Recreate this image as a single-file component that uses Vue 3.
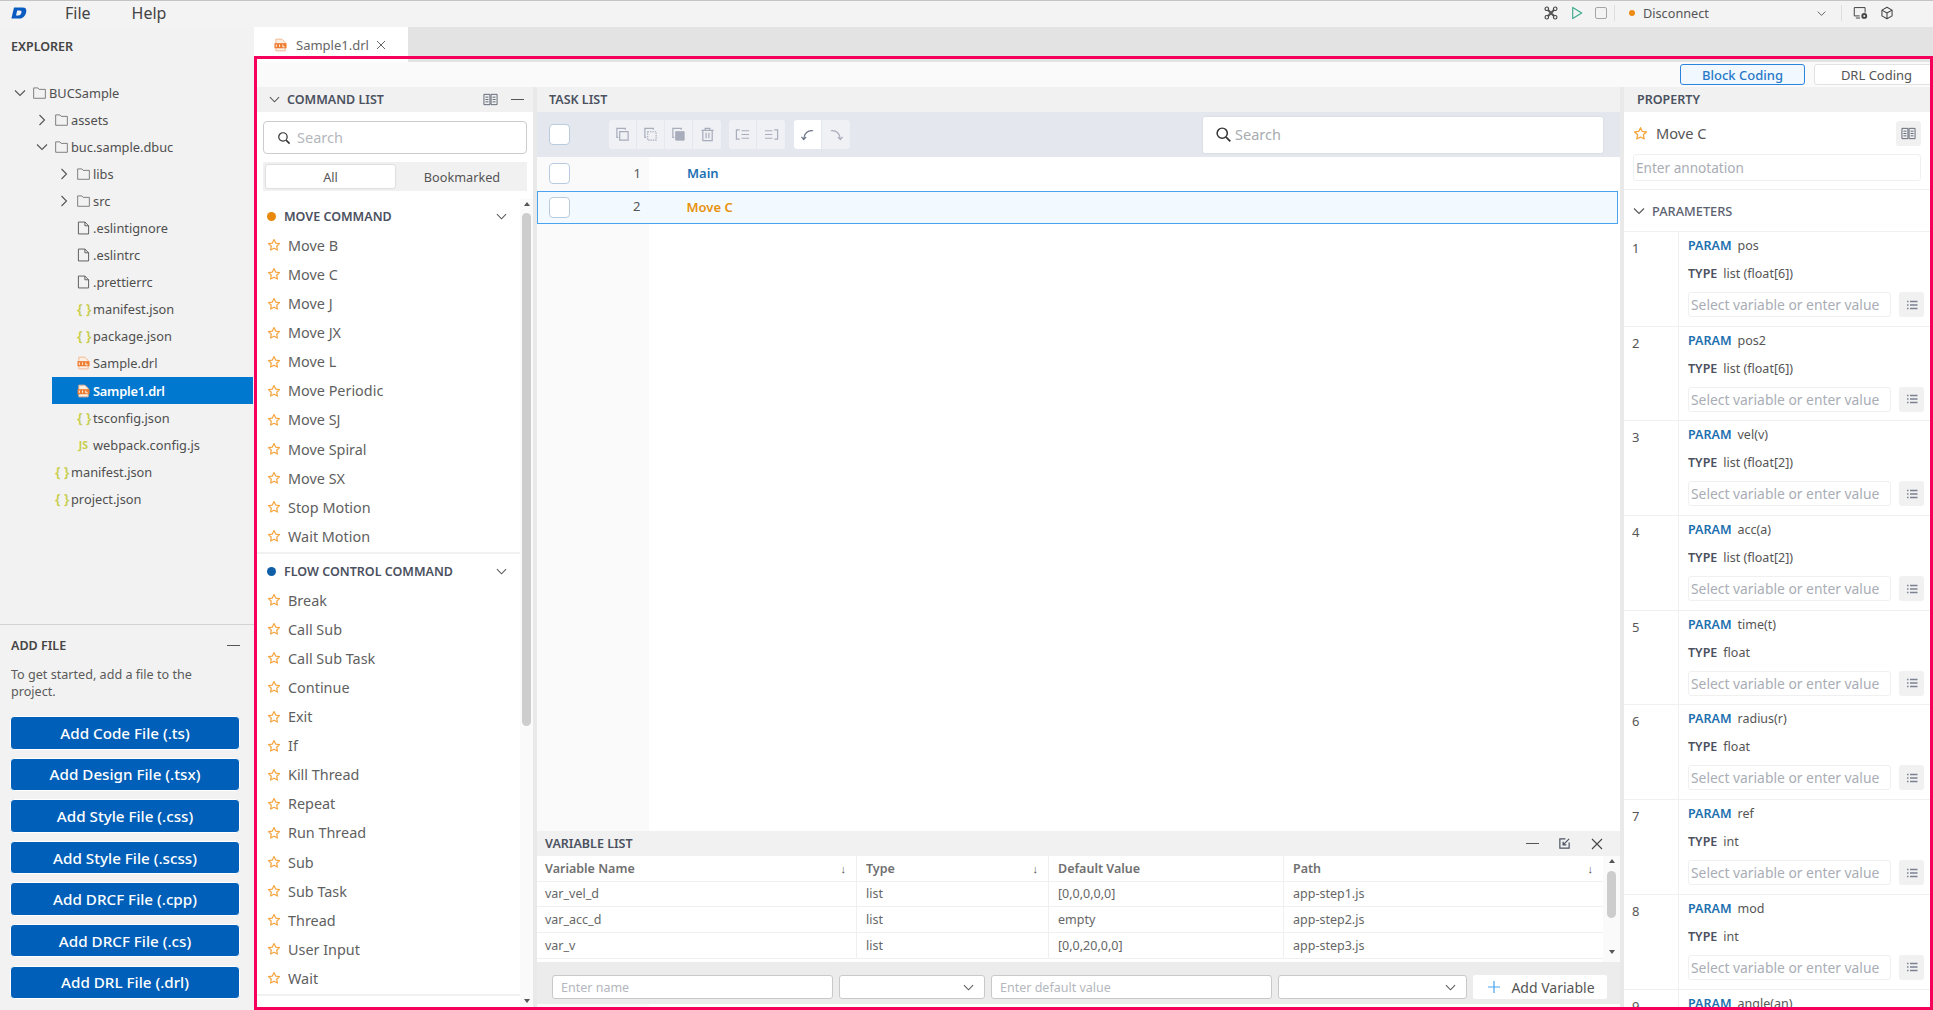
<script setup>
const tree = [
  { name: "BUCSample", level: 0, kind: "folder", open: true },
  { name: "assets", level: 1, kind: "folder", open: false },
  { name: "buc.sample.dbuc", level: 1, kind: "folder", open: true },
  { name: "libs", level: 2, kind: "folder", open: false },
  { name: "src", level: 2, kind: "folder", open: false },
  { name: ".eslintignore", level: 2, kind: "file" },
  { name: ".eslintrc", level: 2, kind: "file" },
  { name: ".prettierrc", level: 2, kind: "file" },
  { name: "manifest.json", level: 2, kind: "json" },
  { name: "package.json", level: 2, kind: "json" },
  { name: "Sample.drl", level: 2, kind: "drl" },
  { name: "Sample1.drl", level: 2, kind: "drl", active: true },
  { name: "tsconfig.json", level: 2, kind: "json" },
  { name: "webpack.config.js", level: 2, kind: "js" },
  { name: "manifest.json", level: 1, kind: "json" },
  { name: "project.json", level: 1, kind: "json" },
];

const addButtons = [
  "Add Code File (.ts)",
  "Add Design File (.tsx)",
  "Add Style File (.css)",
  "Add Style File (.scss)",
  "Add DRCF File (.cpp)",
  "Add DRCF File (.cs)",
  "Add DRL File (.drl)",
];

const groups = [
  {
    title: "MOVE COMMAND",
    color: "#e8890c",
    items: ["Move B", "Move C", "Move J", "Move JX", "Move L", "Move Periodic", "Move SJ", "Move Spiral", "Move SX", "Stop Motion", "Wait Motion"],
  },
  {
    title: "FLOW CONTROL COMMAND",
    color: "#0f5fa8",
    items: ["Break", "Call Sub", "Call Sub Task", "Continue", "Exit", "If", "Kill Thread", "Repeat", "Run Thread", "Sub", "Sub Task", "Thread", "User Input", "Wait"],
  },
];

const tasks = [
  { no: 1, name: "Main", cls: "main" },
  { no: 2, name: "Move C", cls: "move", selected: true },
];

const variables = [
  ["var_vel_d", "list", "[0,0,0,0,0]", "app-step1.js"],
  ["var_acc_d", "list", "empty", "app-step2.js"],
  ["var_v", "list", "[0,0,20,0,0]", "app-step3.js"],
];

const params = [
  ["pos", "list (float[6])"],
  ["pos2", "list (float[6])"],
  ["vel(v)", "list (float[2])"],
  ["acc(a)", "list (float[2])"],
  ["time(t)", "float"],
  ["radius(r)", "float"],
  ["ref", "int"],
  ["mod", "int"],
  ["angle(an)", "float"],
];
</script>

<template>
  <div class="app">
    <svg class="sprite" aria-hidden="true">
      <symbol id="star" viewBox="0 0 16 16"><path d="M8 1.800l1.900 4 4.400.6-3.200 3 .8 4.400L8 11.700l-3.900 2.100.8-4.400-3.200-3 4.400-.6z" fill="none" stroke="#f5a53f" stroke-width="1.400" stroke-linejoin="round" /></symbol>
      <symbol id="down" viewBox="0 0 12 12"><path d="M1 3.500l5 5 5-5" fill="none" stroke="currentColor" stroke-width="1.100" /></symbol>
      <symbol id="right" viewBox="0 0 12 12"><path d="M3.500 1l5 5-5 5" fill="none" stroke="currentColor" stroke-width="1.100" /></symbol>
      <symbol id="folder" viewBox="0 0 14 14"><path d="M.7 12.700V1.500h4.600l1.300 1.600h6.700v9.600z" fill="none" stroke="#777" stroke-width="1" stroke-linejoin="round" /></symbol>
      <symbol id="file" viewBox="0 0 14 14"><path d="M1.500.6h7l4 4v8.800h-11zM8.500.6v4h4" fill="none" stroke="#555" stroke-width="1" stroke-linejoin="round" /></symbol>
      <symbol id="drl" viewBox="0 0 14 14"><path d="M2 .7h6.500l3.500 3.500v9.100H2z" fill="#fdeee2" stroke="#f3b68c" stroke-width="1" /><rect x=".5" y="5" width="13" height="5.500" fill="#ee7d31" /><path d="M2.500 6.500v2.500M6 6.500v2.500M9.500 6.500v2.500h2" stroke="#fff" stroke-width="1" fill="none" /></symbol>
      <symbol id="search" viewBox="0 0 16 16"><circle cx="6.800" cy="6.800" r="4.800" fill="none" stroke="#333" stroke-width="1.400" /><path d="M10.400 10.400l4 4" stroke="#333" stroke-width="1.700" /></symbol>
      <symbol id="book" viewBox="0 0 16 16"><path d="M1 2.500h6.400v11H1zM8.600 2.500H15v11H8.600zM2.600 5.500h3.200M2.600 8h3.200M2.600 10.500h3.200M10.200 5.500h3.200M10.200 8h3.200M10.200 10.500h3.200" fill="none" stroke="#5c6270" stroke-width="1" /></symbol>
      <symbol id="list" viewBox="0 0 12 12"><path d="M1 2.500h1.500M4 2.500h7.500M1 6h1.500M4 6h7.500M1 9.500h1.500M4 9.500h7.500" stroke="#7b8291" stroke-width="1.400" /></symbol>
    </svg>

    <header class="menubar">
      <svg class="logo" viewBox="0 0 16 12"><path d="M3 .5h8.500c3 0 4.400 1.500 3.700 4.400-.8 4-3.200 6.600-7.200 6.600H.4zM6.200 3.400L5 8.600h2.200c1.800 0 2.800-1.200 3.300-3 .3-1.500-.3-2.200-1.700-2.200z" fill="#0b5cc0" fill-rule="evenodd" /></svg>
      <span class="menu file-menu">File</span>
      <span class="menu">Help</span>
      <div class="top-actions">
        <svg class="tool wrench" viewBox="0 0 16 16"><path d="M3.500 3.500l9 9M12.500 3.500l-9 9" stroke="#555" stroke-width="2.400" /><circle cx="3.200" cy="3.200" r="2" fill="#f3f3f3" stroke="#444" stroke-width="1.300" /><circle cx="12.800" cy="3.200" r="2" fill="#f3f3f3" stroke="#444" stroke-width="1.300" /><circle cx="3.200" cy="12.800" r="2" fill="#f3f3f3" stroke="#444" stroke-width="1.300" /><circle cx="12.800" cy="12.800" r="2" fill="#f3f3f3" stroke="#444" stroke-width="1.300" /></svg>
        <svg class="tool play" viewBox="0 0 14 16"><path d="M2 1.500v13l10.500-6.500z" fill="none" stroke="#3aa88a" stroke-width="1.300" stroke-linejoin="round" /></svg>
        <span class="stop"></span>
        <i class="sep"></i>
        <span class="conn-dot"></span>
        <span class="conn">Disconnect</span>
        <svg class="conn-caret"><use href="#down" /></svg>
        <i class="sep sep-b"></i>
        <svg class="tool" viewBox="0 0 18 16"><path d="M8 11.500H1.500V1.500h13v6M3.500 14h5" fill="none" stroke="#444" stroke-width="1.200" /><circle cx="13.500" cy="11.500" r="3.500" fill="#444" /><circle cx="13.500" cy="11.500" r="1.200" fill="#f2f2f2" /></svg>
        <svg class="tool cube" viewBox="0 0 16 16"><path d="M8 1.500l5.800 3.200v6.600L8 14.500l-5.800-3.200V4.700zM2.200 4.700L8 8l5.800-3.300M8 8v6.500" fill="none" stroke="#444" stroke-width="1.200" stroke-linejoin="round" /></svg>
      </div>
    </header>

    <div class="workspace">
      <aside class="sidebar">
        <h2 class="explorer-title">EXPLORER</h2>
        <div class="tree">
          <div
            v-for="(node, i) in tree"
            :key="i"
            class="tree-row"
            :class="['lvl' + node.level, { active: node.active }]"
          >
            <span class="tree-body">
              <span class="caret">
                <svg v-if="node.kind === 'folder'"><use :href="node.open ? '#down' : '#right'" /></svg>
              </span>
              <svg v-if="node.kind === 'folder'" class="node-icon folder"><use href="#folder" /></svg>
              <svg v-else-if="node.kind === 'file'" class="node-icon"><use href="#file" /></svg>
              <svg v-else-if="node.kind === 'drl'" class="node-icon"><use href="#drl" /></svg>
              <span v-else-if="node.kind === 'json'" class="node-icon glyph">{ }</span>
              <span v-else class="node-icon glyph js">JS</span>
              <span class="node-name">{{ node.name }}</span>
            </span>
          </div>
        </div>
        <section class="add-file">
          <div class="add-head">
            <h2>ADD FILE</h2>
            <i class="dash"></i>
          </div>
          <p>To get started, add a file to the project.</p>
          <button v-for="label in addButtons" :key="label" class="add-btn">{{ label }}</button>
        </section>
      </aside>

      <main class="editor">
        <div class="tabbar">
          <div class="tab">
            <svg class="tab-icon"><use href="#drl" /></svg>
            <span>Sample1.drl</span>
            <svg class="tab-close" viewBox="0 0 10 10"><path d="M1 1l8 8M9 1l-8 8" stroke="#666" stroke-width="1" /></svg>
          </div>
        </div>
        <div class="modebar">
          <button class="mode on">Block Coding</button>
          <button class="mode">DRL Coding</button>
        </div>

        <div class="panels">
          <section class="commands">
            <div class="panel-head cmd-head">
              <svg class="head-caret"><use href="#down" /></svg>
              <span>COMMAND LIST</span>
              <svg class="head-book"><use href="#book" /></svg>
              <i class="dash dash-cmd"></i>
            </div>
            <div class="cmd-search">
              <svg class="search-icon"><use href="#search" /></svg>
              <span>Search</span>
            </div>
            <div class="segment">
              <span class="seg on">All</span>
              <span class="seg">Bookmarked</span>
            </div>
            <div class="cmd-scroll">
              <div class="cmd-list">
                <div v-for="g in groups" :key="g.title" class="cmd-group">
                  <div class="group-head">
                    <i class="group-dot" :style="{ background: g.color }"></i>
                    <span>{{ g.title }}</span>
                    <svg class="group-caret"><use href="#down" /></svg>
                  </div>
                  <div v-for="item in g.items" :key="item" class="cmd-item">
                    <svg class="star"><use href="#star" /></svg>
                    <span>{{ item }}</span>
                  </div>
                </div>
              </div>
              <div class="vscroll">
                <i class="arrow up"></i>
                <i class="thumb"></i>
                <i class="arrow dn"></i>
              </div>
            </div>
          </section>

          <section class="tasks">
            <div class="panel-head task-head">TASK LIST</div>
            <div class="toolbar">
              <span class="check"></span>
              <div class="tb-group first">
                <span class="tb-btn"><svg viewBox="0 0 16 16"><path d="M5 5h9v9H5zM11 3V1.500H2V11h1.500" fill="none" stroke="#a8adbb" stroke-width="1.300" /></svg></span>
                <span class="tb-btn"><svg viewBox="0 0 16 16"><path d="M5 5h9v9H5z" fill="none" stroke="#a8adbb" stroke-width="1.200" stroke-dasharray="1.500 1" /><path d="M11 3V1.500H2V11h1.500" fill="none" stroke="#a8adbb" stroke-width="1.300" /></svg></span>
                <span class="tb-btn"><svg viewBox="0 0 16 16"><path d="M5 5h9v9H5z" fill="#a8adbb" stroke="#a8adbb" /><path d="M11 3V1.500H2V11h1.500" fill="none" stroke="#a8adbb" stroke-width="1.300" /></svg></span>
                <span class="tb-btn"><svg viewBox="0 0 16 16"><path d="M1.500 3.500h13M5.500 3.500V1.500h5v2M3 3.500v11h10v-11M6.500 6v6M9.500 6v6" fill="none" stroke="#a8adbb" stroke-width="1.300" /></svg></span>
              </div>
              <div class="tb-group second">
                <span class="tb-btn"><svg viewBox="0 0 16 16"><path d="M5 3H1.500v10H5M7 4h8M7 8h8M7 12h8" fill="none" stroke="#a8adbb" stroke-width="1.300" /></svg></span>
                <span class="tb-btn"><svg viewBox="0 0 16 16"><path d="M11 3h3.500v10H11M1 4h8M1 8h8M1 12h8" fill="none" stroke="#a8adbb" stroke-width="1.300" /></svg></span>
              </div>
              <div class="tb-group">
                <span class="tb-btn live"><svg viewBox="0 0 16 16"><path d="M14 4C8 3.500 4.500 6.500 4 13M1.500 10.500L4 13.500l2.500-3" fill="none" stroke="#6b7385" stroke-width="1.300" /></svg></span>
                <span class="tb-btn"><svg viewBox="0 0 16 16"><path d="M2 4c6-.5 9.500 2.500 10 9M14.500 10.500L12 13.500l-2.500-3" fill="none" stroke="#a8adbb" stroke-width="1.300" /></svg></span>
              </div>
              <div class="task-search">
                <svg class="search-icon"><use href="#search" /></svg>
                <span>Search</span>
              </div>
            </div>

            <div class="task-body">
              <div
                v-for="t in tasks"
                :key="t.no"
                class="task-row"
                :class="{ selected: t.selected }"
              >
                <span class="check"></span>
                <span class="task-no">{{ t.no }}</span>
                <span class="task-name" :class="t.cls">{{ t.name }}</span>
              </div>
            </div>

            <div class="variables">
              <div class="panel-head var-head">
                <span>VARIABLE LIST</span>
                <i class="dash dash-var"></i>
                <svg class="var-pop" viewBox="0 0 14 14"><path d="M8 2H2v10h10V6M5.500 8.500L12 2M5.500 5v3.500H9" fill="none" stroke="#4d5462" stroke-width="1.300" /></svg>
                <svg class="var-close" viewBox="0 0 12 12"><path d="M1 1l10 10M11 1L1 11" stroke="#444" stroke-width="1.100" /></svg>
              </div>
              <div class="var-table-wrap">
                <div class="var-table">
                  <div class="var-row var-cols">
                    <span>Variable Name<em>↓</em></span>
                    <span>Type<em>↓</em></span>
                    <span>Default Value</span>
                    <span>Path<em>↓</em></span>
                  </div>
                  <div v-for="row in variables" :key="row[0]" class="var-row">
                    <span v-for="cell in row" :key="cell">{{ cell }}</span>
                  </div>
                </div>
                <div class="vscroll var-scroll">
                  <i class="arrow up"></i>
                  <i class="thumb"></i>
                  <i class="arrow dn"></i>
                </div>
              </div>
              <div class="var-form">
                <span class="field f-name">Enter name</span>
                <span class="field f-type"><svg><use href="#down" /></svg></span>
                <span class="field f-value">Enter default value</span>
                <span class="field f-path"><svg><use href="#down" /></svg></span>
                <button class="add-var">
                  <svg viewBox="0 0 12 12"><path d="M6 0v12M0 6h12" stroke="#4aa3ee" stroke-width="1.200" /></svg>
                  Add Variable
                </button>
              </div>
            </div>
          </section>

          <section class="property">
            <div class="panel-head prop-head">PROPERTY</div>
            <div class="prop-title">
              <svg class="star big"><use href="#star" /></svg>
              <span>Move C</span>
              <span class="book-btn"><svg><use href="#book" /></svg></span>
            </div>
            <div class="annotation">Enter annotation</div>
            <div class="param-head">
              <svg><use href="#down" /></svg>
              <span>PARAMETERS</span>
            </div>
            <div class="param-list">
              <div v-for="(p, i) in params" :key="p[0]" class="param">
                <span class="param-no">{{ i + 1 }}</span>
                <div class="param-body">
                  <div class="param-line"><b class="blue">PARAM</b>{{ p[0] }}</div>
                  <div class="param-line type"><b>TYPE</b>{{ p[1] }}</div>
                  <div class="param-input">
                    <span class="param-field">Select variable or enter value</span>
                    <span class="list-btn"><svg><use href="#list" /></svg></span>
                  </div>
                </div>
              </div>
            </div>
          </section>
        </div>
      </main>
    </div>

    <div class="highlight"></div>
  </div>
</template>

<style>
html,
body {
  margin: 0;
  background: #f2f2f2;
}
</style>

<style scoped>
.app {
  position: relative;
  width: 1933px;
  height: 1010px;
  overflow: hidden;
  display: flex;
  flex-direction: column;
  font-family: "Noto Sans", "Open Sans", sans-serif;
  font-size: 13px;
  color: #555;
  background: #f2f2f2;
}
.sprite {
  position: absolute;
  width: 0;
  height: 0;
}
h2,
p {
  margin: 0;
}
button {
  font-family: inherit;
  cursor: pointer;
}
em {
  font-style: normal;
}

/* top bar */
.menubar {
  height: 26px;
  flex: none;
  box-sizing: content-box;
  border-top: 1px solid #c4c4c4;
  display: flex;
  align-items: center;
  padding-left: 11px;
  background: #f3f3f3;
}
.logo {
  width: 16px;
  height: 12px;
  margin-bottom: 2px;
}
.menu {
  font-size: 16px;
  color: #444;
  margin-left: 41px;
  margin-bottom: 2px;
}
.file-menu {
  margin-left: 38px;
}
.top-actions {
  margin-left: auto;
  display: flex;
  align-items: center;
  padding-right: 39px;
  margin-bottom: 2px;
}
.tool {
  width: 15px;
  height: 14px;
  margin-right: 12px;
}
.tool.wrench {
  width: 14px;
  height: 14px;
  margin-right: 13px;
}
.play {
  width: 12px;
  height: 14px;
}
.stop {
  width: 12px;
  height: 12px;
  box-sizing: border-box;
  border: 1.500px solid #a5a5a5;
  border-radius: 2px;
}
.sep {
  width: 1px;
  height: 16px;
  background: #ddd;
  margin: 0 14px 0 7px;
}
.conn-dot {
  width: 6px;
  height: 6px;
  border-radius: 50%;
  background: #ec8a12;
  margin-right: 8px;
}
.conn {
  font-size: 12.700px;
  width: 174px;
  color: #555;
}
.conn-caret {
  width: 9px;
  height: 9px;
  color: #444;
}
.sep-b {
  margin: 0 11px 0 15px;
}
.tool.cube {
  width: 14px;
  margin: 0;
}

.workspace {
  flex: 1;
  display: flex;
  min-height: 0;
}

/* explorer */
.sidebar {
  width: 254px;
  flex: none;
  display: flex;
  flex-direction: column;
  background: #f2f2f2;
}
.explorer-title {
  font-size: 12.500px;
  font-weight: 600;
  color: #444;
  height: 38px;
  line-height: 40px;
  padding-left: 11px;
  flex: none;
}
.tree {
  flex: 1;
  padding-top: 14px;
}
.tree-row {
  height: 27.100px;
  display: flex;
  align-items: center;
}
.tree-body {
  display: flex;
  align-items: center;
  height: 100%;
  flex: 1;
}
.lvl0 {
  padding-left: 14px;
}
.lvl1 {
  padding-left: 36px;
}
.lvl2 {
  padding-left: 58px;
}
.caret {
  width: 16px;
  height: 12px;
  flex: none;
  color: #555;
  display: flex;
  margin-right: 3px;
}
.caret svg {
  width: 12px;
  height: 12px;
}
.node-icon {
  width: 13px;
  height: 14px;
  flex: none;
}
.glyph {
  font-size: 14px;
  font-weight: 600;
  line-height: 14px;
  color: #c8ce4d;
  white-space: nowrap;
  text-align: center;
}
.js {
  font-size: 10.500px;
  font-weight: 700;
}
.node-name {
  font-size: 12.800px;
  color: #4f4f4f;
  margin-left: 3px;
  white-space: nowrap;
}
.tree-row.active .tree-body {
  background: #0078d0;
  margin: 0 1px 0 -6px;
  padding-left: 6px;
}
.tree-row.active .node-name {
  color: #fff;
  font-weight: 600;
  letter-spacing: -0.2px;
}

.add-file {
  flex: none;
  height: 386px;
  box-sizing: border-box;
  border-top: 1px solid #d2d2d2;
  padding: 0 14px 0 11px;
}
.add-head {
  height: 41px;
  display: flex;
  align-items: center;
  justify-content: space-between;
}
.add-head h2 {
  font-size: 12.500px;
  font-weight: 600;
  color: #444;
}
.dash {
  display: block;
  width: 13px;
  height: 1px;
  background: #555;
}
.add-file p {
  font-size: 12.600px;
  line-height: 16.500px;
  color: #5a5a5a;
  height: 49px;
  margin-top: 1px;
  width: 200px;
}
.add-btn {
  display: block;
  width: 230px;
  height: 33.500px;
  margin: 0 0 8.100px -1px;
  border: 1px solid #fff;
  outline: none;
  border-radius: 4px;
  background: #005fb8;
  color: #fff;
  font-size: 15.200px;
  font-weight: 500;
  padding: 0;
}

/* editor shell */
.editor {
  flex: 1;
  min-width: 0;
  display: flex;
  flex-direction: column;
}
.tabbar {
  height: 35px;
  flex: none;
  background: #e3e3e3;
}
.tab {
  width: 154px;
  height: 100%;
  background: #fff;
  display: flex;
  align-items: center;
  box-sizing: border-box;
  padding-left: 20px;
  font-size: 13px;
  color: #666;
}
.tab-icon {
  width: 13px;
  height: 14px;
  margin-right: 9px;
}
.tab-close {
  width: 10px;
  height: 10px;
  margin-left: 7px;
}
.modebar {
  height: 25px;
  flex: none;
  background: #fafafa;
  display: flex;
  justify-content: flex-end;
  gap: 9px;
  padding-top: 2px;
  box-sizing: border-box;
  margin-right: -6px;
}
.mode {
  width: 125px;
  height: 21px;
  background: #fff;
  border: 1px solid #e2e2e2;
  border-radius: 3px;
  font-size: 13px;
  color: #555;
  padding: 0;
  line-height: 18px;
}
.mode.on {
  background: #f2f8ff;
  border-color: #2b84dc;
  color: #2878c8;
  font-weight: 500;
}
.panels {
  flex: 1;
  min-height: 0;
  display: flex;
}
.panel-head {
  height: 25px;
  flex: none;
  background: #f1f1f1;
  display: flex;
  align-items: center;
  font-size: 12.500px;
  font-weight: 600;
  color: #4b5160;
}

/* command list */
.commands {
  width: 279px;
  flex: none;
  display: flex;
  flex-direction: column;
  background: #fff;
}
.cmd-head {
  padding-left: 15px;
}
.head-caret {
  width: 11px;
  height: 11px;
  color: #555;
  margin-right: 7px;
}
.head-book {
  width: 15px;
  height: 15px;
  margin-left: auto;
  margin-right: 13px;
}
.dash-cmd {
  margin-right: 9px;
}
.cmd-search {
  flex: none;
  margin: 9px 6px 8px 9px;
  height: 33px;
  box-sizing: border-box;
  border: 1.500px solid #ccc;
  border-radius: 4px;
  display: flex;
  align-items: center;
  padding-left: 13px;
  font-size: 14.500px;
  line-height: 18px;
  color: #b4b7bd;
}
.cmd-search span,
.task-search span {
  margin-bottom: 1px;
}
.search-icon {
  width: 14px;
  height: 14px;
  margin-right: 6px;
}
.segment {
  flex: none;
  margin: 0 6px 8px 9px;
  height: 29px;
  box-sizing: border-box;
  padding: 3px;
  background: #f1f1f1;
  display: flex;
  font-size: 12.700px;
}
.seg {
  flex: 1;
  display: flex;
  align-items: center;
  justify-content: center;
  color: #555;
  padding-left: 5px;
}
.seg.on {
  flex: none;
  width: 129px;
  padding-left: 0;
  background: #fff;
  border-radius: 2px;
  box-shadow: 0 0 2px rgba(0, 0, 0, 0.25);
}
.cmd-scroll {
  flex: 1;
  min-height: 0;
  display: flex;
}
.cmd-list {
  flex: 1;
  min-width: 0;
  overflow: hidden;
}
.cmd-group {
  border-bottom: 2px solid #f1f1f1;
  padding-bottom: 1px;
}
.group-head {
  height: 31.800px;
  box-sizing: border-box;
  padding-top: 4px;
  display: flex;
  align-items: center;
  padding-left: 13px;
  font-size: 12.500px;
  font-weight: 600;
  color: #4b5160;
}
.group-dot {
  width: 9px;
  height: 9px;
  border-radius: 50%;
  margin-right: 8px;
}
.group-caret {
  width: 11px;
  height: 11px;
  margin-left: auto;
  margin-right: 13px;
  color: #555;
}
.cmd-item {
  height: 29.100px;
  display: flex;
  align-items: center;
  padding-left: 13px;
  font-size: 14.400px;
  color: #5f5f5f;
}
.star {
  width: 14px;
  height: 14px;
  margin-right: 7px;
  flex: none;
}
.vscroll {
  width: 13px;
  flex: none;
  background: #fafafa;
  display: flex;
  flex-direction: column;
  align-items: center;
  padding-top: 3px;
  box-sizing: border-box;
}
.thumb {
  width: 9px;
  height: 513px;
  margin-top: 7px;
  background: #cdcdcd;
  border-radius: 5px;
}
.arrow {
  width: 0;
  height: 0;
  border-left: 3.500px solid transparent;
  border-right: 3.500px solid transparent;
}
.arrow.up {
  border-bottom: 4px solid #555;
}
.arrow.dn {
  border-top: 4px solid #555;
  margin-top: auto;
  margin-bottom: 7px;
}

/* task list */
.tasks {
  flex: 1;
  min-width: 0;
  display: flex;
  flex-direction: column;
  margin-left: 4px;
  margin-right: 4px;
  background: linear-gradient(90deg, #fafafa 112px, #fff 112px);
  box-shadow: -4px 0 0 #e9e9e9, 4px 0 0 #e9e9e9;
}
.task-head {
  padding-left: 12px;
}
.toolbar {
  flex: none;
  height: 45px;
  background: #e4e7ee;
  display: flex;
  align-items: center;
  padding-left: 12px;
}
.check {
  width: 21px;
  height: 21px;
  flex: none;
  box-sizing: border-box;
  background: #fff;
  border: 1.500px solid #b9cbdf;
  border-radius: 4px;
}
.tb-group {
  display: flex;
  margin-left: 9px;
}
.tb-group.first {
  margin-left: 39px;
}
.tb-group.second {
  margin-left: 8px;
}
.tb-btn {
  width: 28px;
  height: 29px;
  box-sizing: border-box;
  background: #f0f1f5;
  border-right: 1px solid #e4e7ee;
  display: flex;
  align-items: center;
  justify-content: center;
}
.tb-btn:first-child {
  border-radius: 3px 0 0 3px;
}
.tb-btn:last-child {
  border-right: none;
  border-radius: 0 3px 3px 0;
}
.tb-btn svg {
  width: 15px;
  height: 15px;
}
.tb-btn.live {
  background: #fff;
}
.task-search {
  margin-left: auto;
  margin-right: 17px;
  width: 400px;
  height: 36px;
  box-sizing: border-box;
  background: #fff;
  border-radius: 2px;
  display: flex;
  align-items: center;
  padding-left: 12px;
  font-size: 14.500px;
  line-height: 18px;
  color: #a8abb0;
  box-shadow: 0 0 2px rgba(0, 0, 0, 0.12);
}
.task-search .search-icon {
  width: 17px;
  height: 17px;
  margin-right: 3px;
}
.task-body {
  flex: 1;
  min-height: 0;
}
.task-row {
  height: 33.500px;
  display: flex;
  align-items: center;
  padding-left: 12px;
  box-sizing: border-box;
  margin-right: 2px;
}
.task-no {
  width: 71px;
  text-align: right;
  font-size: 13px;
  color: #555;
  line-height: 17px;
  margin-bottom: 1px;
}
.task-name {
  margin-left: 46px;
  font-size: 13px;
  font-weight: 600;
  margin-bottom: 1px;
}
.task-name.main {
  color: #2271b3;
}
.task-name.move {
  color: #e8920c;
}
.task-row.selected {
  background: #f2f9ff;
  border: 1.500px solid #4aa3ee;
  padding-left: 10.500px;
}

/* variable list */
.variables {
  flex: none;
  margin-bottom: 6px;
  background: #fff;
}
.var-head {
  padding-left: 8px;
  padding-right: 17px;
}
.dash-var {
  margin-left: auto;
  margin-right: 19px;
}
.var-pop {
  width: 13px;
  height: 13px;
  margin-right: 20px;
}
.var-close {
  width: 12px;
  height: 12px;
}
.var-table-wrap {
  display: flex;
  height: 106px;
  overflow: hidden;
}
.var-table {
  flex: 1;
  min-width: 0;
}
.var-row {
  display: grid;
  grid-template-columns: 320px 192px 235px 1fr;
  height: 25.900px;
  border-bottom: 1px solid #f0f0f0;
  box-sizing: border-box;
  font-size: 12.500px;
  color: #666;
}
.var-row span {
  display: flex;
  align-items: center;
  justify-content: space-between;
  padding: 0 10px 0 9px;
  border-right: 1px solid #f0f0f0;
}
.var-row span:first-child {
  padding-left: 8px;
}
.var-row span:last-child {
  border-right: none;
}
.var-cols {
  height: 25.500px;
  font-weight: 600;
  color: #707070;
}
.var-cols em {
  font-size: 11px;
  font-weight: 400;
  color: #555;
}
.var-scroll {
  width: 17px;
}
.var-scroll .thumb {
  height: 47px;
  margin-top: 8px;
}
.var-scroll .arrow.dn {
  margin-bottom: 8px;
}
.var-form {
  height: 42px;
  box-sizing: border-box;
  background: #ececec;
  display: flex;
  align-items: center;
  gap: 6px;
  padding: 8px 13px 0 15px;
}
.field {
  height: 24px;
  box-sizing: border-box;
  background: #fff;
  border: 1px solid #c9c9c9;
  border-radius: 3px;
  display: flex;
  align-items: center;
  padding: 0 8px;
  font-size: 12.500px;
  color: #b4b7bd;
  flex: none;
}
.field svg {
  width: 11px;
  height: 11px;
  margin-left: auto;
  color: #555;
  margin-right: 2px;
}
.f-name,
.f-value {
  width: 281px;
}
.f-type {
  width: 146px;
}
.f-path {
  width: 189px;
}
.add-var {
  flex: 1;
  height: 24px;
  background: #fff;
  border: none;
  border-radius: 2px;
  display: flex;
  align-items: center;
  justify-content: center;
  gap: 11px;
  font-size: 14px;
  color: #555;
  padding: 0 0 0 3px;
}
.add-var svg {
  width: 12px;
  height: 12px;
}

/* property */
.property {
  width: 309px;
  flex: none;
  display: flex;
  flex-direction: column;
  background: #fff;
  min-height: 0;
  overflow: hidden;
}
.prop-head {
  padding-left: 13px;
}
.prop-title {
  height: 42px;
  flex: none;
  display: flex;
  align-items: center;
  padding-left: 9px;
  font-size: 14.600px;
  color: #555;
}
.star.big {
  width: 15px;
  height: 15px;
  margin-right: 8px;
}
.book-btn {
  margin-left: auto;
  margin-right: 12px;
  width: 25px;
  height: 25px;
  border-radius: 3px;
  background: #f1f1f1;
  display: flex;
  align-items: center;
  justify-content: center;
}
.book-btn svg {
  width: 15px;
  height: 15px;
}
.annotation {
  flex: none;
  margin: 0 12px 8px 9px;
  height: 27px;
  box-sizing: border-box;
  border: 1px solid #f0f0f0;
  border-radius: 3px;
  display: flex;
  align-items: center;
  padding-left: 2px;
  font-size: 13.600px;
  color: #a9adb5;
}
.param-head {
  flex: none;
  height: 43px;
  box-sizing: border-box;
  border-top: 1px solid #f0f0f0;
  border-bottom: 1px solid #f0f0f0;
  display: flex;
  align-items: center;
  padding-left: 9px;
  font-size: 12.800px;
  font-weight: 500;
  color: #5b6170;
}
.param-head svg {
  width: 12px;
  height: 12px;
  color: #555;
  margin-right: 7px;
}
.param {
  height: 94.700px;
  box-sizing: border-box;
  border-bottom: 1px solid #f0f0f0;
  display: flex;
}
.param-no {
  width: 55px;
  flex: none;
  box-sizing: border-box;
  border-right: 1px solid #f0f0f0;
  padding: 4px 0 0 8px;
  font-size: 13px;
  line-height: 24px;
  color: #555;
}
.param-body {
  flex: 1;
  padding-left: 9px;
  min-width: 0;
}
.param-line {
  height: 27px;
  display: flex;
  align-items: center;
  font-size: 12.500px;
  color: #555;
}
.param-line.type {
  margin-top: 1px;
}
.param-line b {
  font-weight: 600;
  margin-right: 6px;
  color: #4b5160;
}
.param-line b.blue {
  color: #1d6fae;
}
.param-input {
  display: flex;
  align-items: center;
  margin-top: 5px;
}
.param-field {
  width: 203px;
  height: 25px;
  box-sizing: border-box;
  border: 1px solid #f0f0f0;
  border-radius: 3px;
  display: flex;
  align-items: center;
  padding-left: 2px;
  font-size: 13.850px;
  color: #a9adb5;
  white-space: nowrap;
}
.list-btn {
  width: 25px;
  height: 25px;
  margin-left: 8px;
  border-radius: 3px;
  background: #f1f1f1;
  display: flex;
  align-items: center;
  justify-content: center;
}
.list-btn svg {
  width: 12px;
  height: 12px;
}

/* pink frame drawn on top of the screenshot */
.highlight {
  position: absolute;
  left: 254px;
  top: 56px;
  right: 0;
  bottom: 0;
  border: 3px solid #f5005a;
  pointer-events: none;
}
</style>
